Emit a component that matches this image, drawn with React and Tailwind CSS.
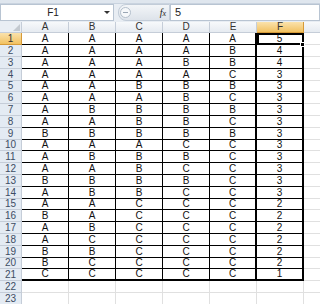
import React from "react";

const data = [
  ["A","A","A","A","A","5"],
  ["A","A","A","A","B","4"],
  ["A","A","A","B","B","4"],
  ["A","A","A","A","C","3"],
  ["A","A","B","B","B","3"],
  ["A","A","A","B","C","3"],
  ["A","B","B","B","B","3"],
  ["A","A","B","B","C","3"],
  ["B","B","B","B","B","3"],
  ["A","A","A","C","C","3"],
  ["A","B","B","B","C","3"],
  ["A","A","B","C","C","3"],
  ["B","B","B","B","C","3"],
  ["A","B","B","C","C","3"],
  ["A","A","C","C","C","2"],
  ["B","A","C","C","C","2"],
  ["A","B","C","C","C","2"],
  ["A","C","C","C","C","2"],
  ["B","B","C","C","C","2"],
  ["B","C","C","C","C","2"],
  ["C","C","C","C","C","1"],
];

const cols = ["A","B","C","D","E","F"];

export default function App() {
  return (
    <div className="w-[320px] h-[304px] overflow-hidden bg-white text-[10px] leading-none" style={{ fontFamily: '"Liberation Sans", Arial, sans-serif' }}>
      {/* top strip */}
      <div className="h-[4px] bg-[#dfe6ee] border-b border-[#c9d3df]" />
      {/* formula bar */}
      <div className="h-[17px] flex items-stretch bg-[#e8edf3]">
        <div className="w-[114px] bg-white border border-[#b8c4d2] flex items-center relative">
          <span className="flex-1 text-center text-[10px] text-[#222] pr-[8px]">F1</span>
          <span className="absolute right-[3px] top-[6px] w-0 h-0 border-l-[3px] border-r-[3px] border-t-[3px] border-l-transparent border-r-transparent border-t-[#333]" />
        </div>
        <div className="w-[4px]" />
        <div className="flex items-center w-[52px] bg-gradient-to-b from-[#f3f5f8] to-[#dde3ea] border border-[#c2ccd8] rounded-l-[8px]">
          <div className="w-[11px] h-[11px] rounded-full border border-[#b4bfcc] bg-[#f6f8fa] ml-[1px] flex items-center justify-center">
            <div className="w-[5px] h-[1px] bg-[#9aa6b4]" />
          </div>
          <div className="flex-1" />
          <span className="italic text-[10px] text-[#222] mr-[3px]" style={{ fontFamily: '"Liberation Serif", serif' }}>f<span className="text-[8px]">x</span></span>
        </div>
        <div className="flex-1 bg-white border border-[#b8c4d2] flex items-center pl-[4px] text-[11px] text-[#222]">5</div>
      </div>
      <div className="h-[1px] bg-[#e8edf3]" />
      {/* grid */}
      <div className="grid grid-cols-[22px_repeat(6,47px)_1fr]">
        {/* header row */}
        <div className="h-[11px] bg-[#e9eef4] border-r border-b border-[#c5cdd8] relative">
          <span className="absolute right-[1px] bottom-[1px] w-0 h-0 border-b-[7px] border-l-[7px] border-b-[#c3c9d0] border-l-transparent" />
        </div>
        {cols.map((c) => (
          <div key={c} className={c === "F"
            ? "h-[11px] bg-gradient-to-b from-[#fae2ab] to-[#f1c15f] border-r border-b border-[#d69a38] flex items-center justify-center text-[#333]"
            : "h-[11px] bg-gradient-to-b from-[#f7f9fb] to-[#e6ebf1] border-r border-b border-[#c5cdd8] flex items-center justify-center text-[#333]"}>{c}</div>
        ))}
        <div className="h-[11px] bg-gradient-to-b from-[#f7f9fb] to-[#e6ebf1] border-b border-[#c5cdd8]" />
        {data.map((row, i) => {
          const h = (i + 1) % 5 === 0 ? "h-[11px]" : "h-[12px]";
          return (
            <React.Fragment key={i}>
              <div className={i === 0
                ? h + " bg-gradient-to-b from-[#fae2ab] to-[#f1c15f] border-r border-b border-[#d69a38] flex items-center justify-center text-[#333]"
                : h + " bg-[#e4ebf3] border-r border-b border-[#c5cdd8] flex items-center justify-center text-[#3d4d63]"}>{i + 1}</div>
              {row.map((v, j) => {
                const isF = j === 5;
                const last = i === data.length - 1;
                let cls = h + " flex items-center justify-center text-[#111] border-black border-r";
                cls += last ? " border-b-2" : " border-b";
                if (isF) cls += " border-r-2";
                if (j === 4) cls += " border-r-2";
                return (
                  <div key={j} className={cls + (isF && i === 0 ? " relative outline outline-2 outline-black -outline-offset-2" : "")}>
                    {v}
                    {isF && i === 0 && (
                      <span className="absolute right-[-3px] bottom-[-3px] w-[5px] h-[5px] bg-black border border-white z-10" />
                    )}
                  </div>
                );
              })}
              <div className={h + " border-b border-[#e0e0e0]"} />
            </React.Fragment>
          );
        })}
        {[22, 23].map((n) => (
          <React.Fragment key={n}>
            <div className="h-[12px] bg-[#e4ebf3] border-r border-b border-[#c5cdd8] flex items-center justify-center text-[#3d4d63]">{n}</div>
            {cols.map((c) => (
              <div key={c} className="h-[12px] border-r border-b border-[#e0e0e0]" />
            ))}
            <div className="h-[12px] border-b border-[#e0e0e0]" />
          </React.Fragment>
        ))}
      </div>
    </div>
  );
}
